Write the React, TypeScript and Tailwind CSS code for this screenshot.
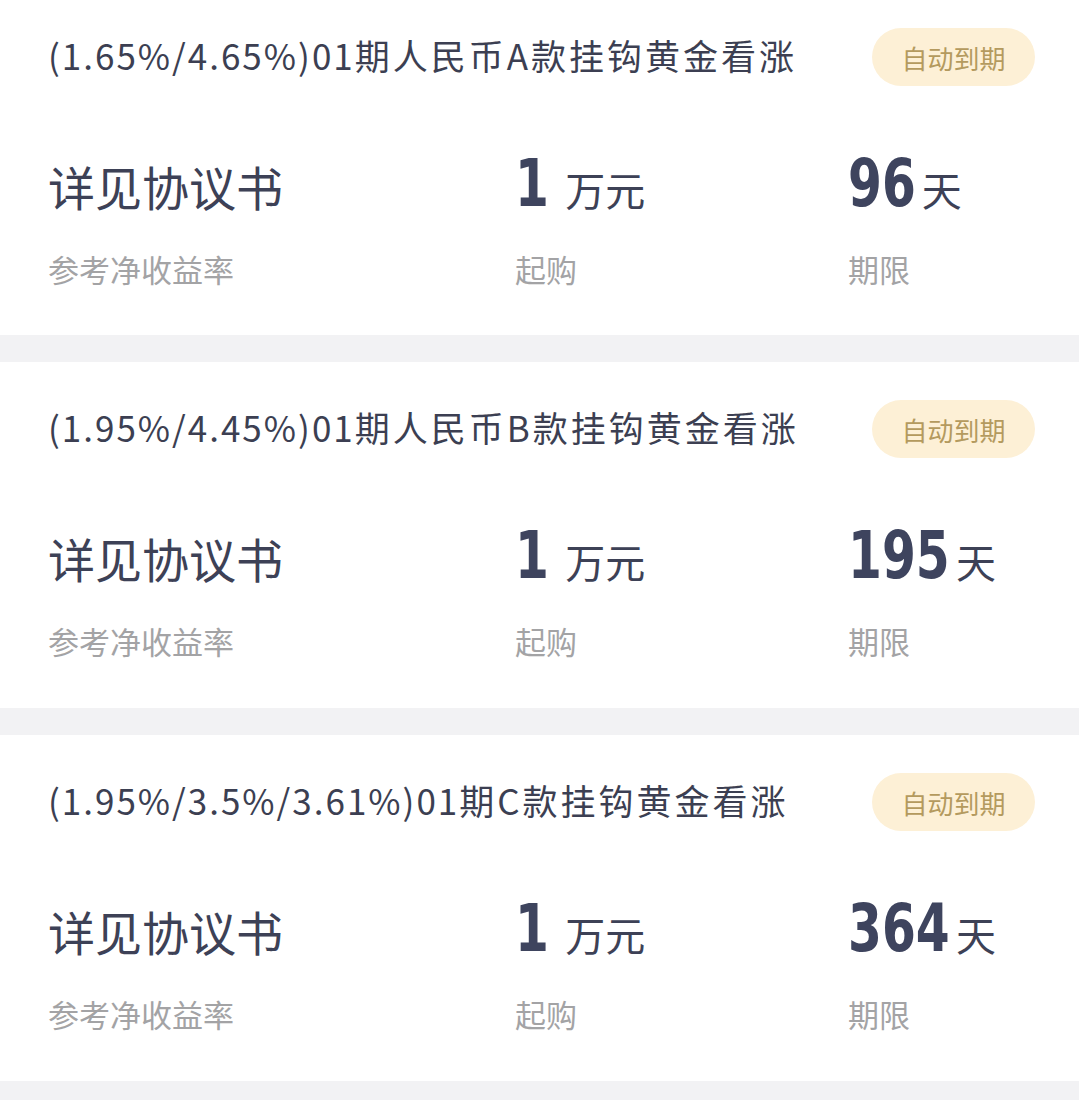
const cjk = "font-['Noto_Sans_CJK_SC',sans-serif]";
const num =
  "inline-block origin-left scale-x-[0.82] font-['DejaVu_Sans_Condensed','DejaVu_Sans',sans-serif] text-[66px] font-bold text-[#3e445e]";

// the digits are drawn narrower than their box, so pull the unit back in
const squeeze: Record<number, string> = {
  1: '-mr-[7px]',
  2: '-mr-[14px]',
  3: '-mr-[21px]',
};

type Product = {
  rates: string;
  name: string;
  days: string;
};

const products: Product[] = [
  { rates: '(1.65%/4.65%)', name: '01期人民币A款挂钩黄金看涨', days: '96' },
  { rates: '(1.95%/4.45%)', name: '01期人民币B款挂钩黄金看涨', days: '195' },
  { rates: '(1.95%/3.5%/3.61%)', name: '01期C款挂钩黄金看涨', days: '364' },
];

function ProductCard({ p, first }: { p: Product; first: boolean }) {
  return (
    <div
      className={`bg-white pl-[48px] pr-[44px] ${first ? 'h-[335px] pt-[28px]' : 'h-[346px] pt-[38px]'}`}
    >
      {/* Header */}
      <div className="flex h-[58px] items-center justify-between">
        <div className={`${cjk} pb-[6px] text-[35px] leading-none whitespace-nowrap text-[#3c3f52]`}>
          <span className="tracking-[2px]">{p.rates}</span>
          <span className="tracking-[2px]">{p.name.slice(0, 2)}</span>
          <span className="tracking-[3px]">{p.name.slice(2)}</span>
        </div>
        <span
          className={`${cjk} flex h-[58px] w-[163px] shrink-0 items-center justify-center rounded-full bg-[#fdf0d6] text-[26px] text-[#b49a5e]`}
        >
          自动到期
        </span>
      </div>

      {/* Values */}
      <div className="mt-[58px] flex items-baseline leading-[80px]">
        <div className={`${cjk} w-[467px] text-[47px] text-[#3d4156]`}>详见协议书</div>
        <div className="flex w-[333px] items-baseline">
          <span className={`${num} ${squeeze[1]}`}>1</span>
          <span className={`${cjk} ml-[16px] text-[40px] text-[#3d4156]`}>万元</span>
        </div>
        <div className="flex items-baseline">
          <span className={`${num} ${squeeze[p.days.length]}`}>{p.days}</span>
          <span className={`${cjk} ml-[5px] text-[40px] text-[#3d4156]`}>天</span>
        </div>
      </div>

      {/* Labels */}
      <div className={`${cjk} mt-[18px] flex text-[31px] leading-[44px] text-[#a3a3a5]`}>
        <div className="w-[467px]">参考净收益率</div>
        <div className="w-[333px]">起购</div>
        <div>期限</div>
      </div>
    </div>
  );
}

export default function App() {
  return (
    <div className="flex min-h-[1100px] flex-col gap-[27px] bg-[#f2f2f4]">
      {products.map((p, i) => (
        <ProductCard key={p.days} p={p} first={i === 0} />
      ))}
    </div>
  );
}
